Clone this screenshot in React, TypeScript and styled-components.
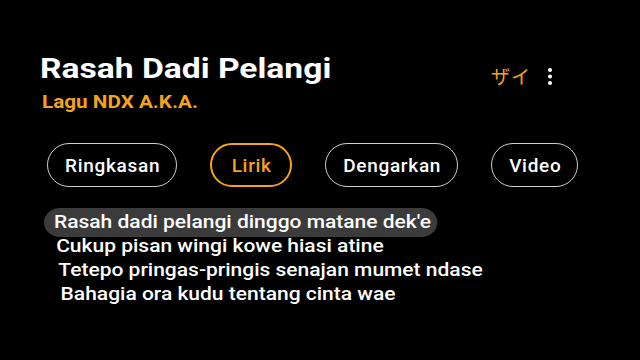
import React from "react";
import styled, { createGlobalStyle } from "styled-components";

const GlobalStyle = createGlobalStyle`
  html, body {
    margin: 0;
    padding: 0;
    background: #000;
  }
  body {
    font-family: Roboto, "Noto Sans", "Liberation Sans", sans-serif;
    color: #fff;
  }
`;

const ORANGE = "#f5a31c";

const Page = styled.div`
  width: 640px;
  height: 360px;
  box-sizing: border-box;
  padding: 55px 0 0 40px;
  display: flex;
  flex-direction: column;
  background: #000;
  overflow: hidden;
`;

const Header = styled.header`
  display: flex;
  align-items: flex-start;
`;

const TitleBlock = styled.div`
  display: flex;
  flex-direction: column;
  align-items: flex-start;
  gap: 10px;
  flex: 1;
`;

/* the source renders its type slightly stretched horizontally */
const Title = styled.h1`
  margin: 0;
  font-size: 28px;
  line-height: 1;
  font-weight: 700;
  color: #fff;
  transform: scaleX(1.2);
  transform-origin: left center;
`;

const Artist = styled.div`
  margin-left: 2px;
  font-size: 18px;
  line-height: 1;
  font-weight: 700;
  color: ${ORANGE};
  transform: scaleX(1.15);
  transform-origin: left center;
`;

const Actions = styled.div`
  display: flex;
  align-items: center;
  gap: 16px;
  margin-top: 10px;
  margin-right: 87px;
`;

const Kana = styled.span`
  font-family: "Noto Sans CJK JP", sans-serif;
  font-size: 19px;
  line-height: 22px;
  letter-spacing: 1px;
  color: ${ORANGE};
`;

const MenuButton = styled.button`
  border: 0;
  background: none;
  padding: 0;
  display: flex;
  color: #fff;
`;

const Tabs = styled.nav`
  display: flex;
  gap: 33px;
  margin: 32px 0 0 7px;
`;

const Pill = styled.button<{ $active?: boolean }>`
  height: 44px;
  min-width: 82px;
  box-sizing: border-box;
  padding: 0 16px 0 17px;
  border-radius: 22px;
  border-style: solid;
  border-color: ${(p) => (p.$active ? ORANGE : "#cfcfcf")};
  border-width: ${(p) => (p.$active ? "2px" : "1.5px")};
  background: transparent;
  color: ${(p) => (p.$active ? ORANGE : "#fff")};
  font-family: Roboto, sans-serif;
  font-size: 19px;
  font-weight: 500;
  letter-spacing: 0.7px;
  display: flex;
  align-items: center;
  justify-content: center;
`;

const Lyrics = styled.div`
  display: flex;
  flex-direction: column;
  align-items: flex-start;
  margin: 23px 0 0 4px;
`;

const Line = styled.div<{ $active?: boolean; $indent: number }>`
  font-size: 19px;
  line-height: 24px;
  font-weight: 500;
  color: #fff;
  white-space: nowrap;
  padding: ${(p) => (p.$active ? "2.5px 6px 2.5px" : "0 0 0")} ${(p) => p.$indent}px;
  margin: ${(p) => (p.$active ? "-2.5px 0" : "0")};
  border-radius: 15px;
  background: ${(p) => (p.$active ? "#3b3b3b" : "transparent")};
  transform: scaleX(1.105);
  transform-origin: left center;
`;

const tabs = ["Ringkasan", "Lirik", "Dengarkan", "Video"];

const lines = [
  { text: "Rasah dadi pelangi dinggo matane dek'e", indent: 9 },
  { text: "Cukup pisan wingi kowe hiasi atine", indent: 11 },
  { text: "Tetepo pringas-pringis senajan mumet ndase", indent: 13 },
  { text: "Bahagia ora kudu tentang cinta wae", indent: 15 },
];

export default function App() {
  return (
    <>
      <GlobalStyle />
      <Page>
        <Header>
          <TitleBlock>
            <Title>Rasah Dadi Pelangi</Title>
            <Artist>Lagu NDX A.K.A.</Artist>
          </TitleBlock>
          <Actions>
            <Kana>ザイ</Kana>
            <MenuButton aria-label="menu">
              <svg width="6" height="19" viewBox="0 0 6 19">
                <circle cx="3" cy="3" r="2" fill="currentColor" />
                <circle cx="3" cy="9.5" r="2" fill="currentColor" />
                <circle cx="3" cy="16" r="2" fill="currentColor" />
              </svg>
            </MenuButton>
          </Actions>
        </Header>
        <Tabs>
          {tabs.map((t) => (
            <Pill key={t} $active={t === "Lirik"}>
              {t}
            </Pill>
          ))}
        </Tabs>
        <Lyrics>
          {lines.map((l, i) => (
            <Line key={i} $active={i === 0} $indent={l.indent}>
              {l.text}
            </Line>
          ))}
        </Lyrics>
      </Page>
    </>
  );
}
